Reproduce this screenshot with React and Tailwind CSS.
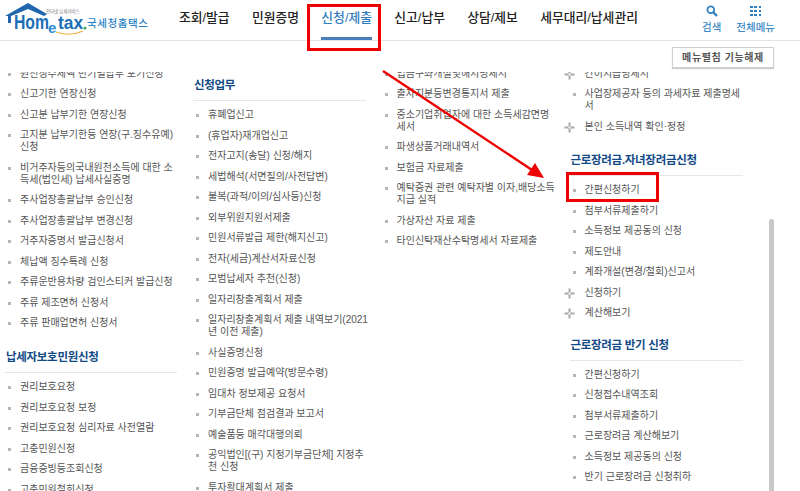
import React from "react";

const FONT = "font-['Liberation_Sans','Noto_Sans_CJK_KR',sans-serif]";

const navItems = ["조회/발급", "민원증명", "신청/제출", "신고/납부", "상담/제보", "세무대리/납세관리"];

const PlusIcon = () => (
  <svg width="11" height="11" viewBox="0 0 11 11" className="absolute left-[-6px] top-[1px]">
    <path d="M5.5 0.5v10M0.5 5.5h10" stroke="#a8a8a8" strokeWidth="2" />
    <path d="M5.5 4v3M4 5.5h3" stroke="#e4e4e4" strokeWidth="1" />
  </svg>
);

// one row of a menu list, the text wraps under itself
const Item = ({ children, plus }) => (
  <li className="relative pl-[15px] pb-[8.5px] leading-[12px] text-[10px] text-[#555] break-all">
    {plus ? <PlusIcon /> : <span className="absolute left-[3px] top-[5px] w-[3px] h-[3px] bg-[#b4b4b4]" />}
    {children}
  </li>
);

const Heading = ({ children, className = "" }) => (
  <h3 className={`${className} text-[11.5px] leading-[16px] font-bold text-[#124a86] pb-[7px] pl-px border-b border-[#e6e6e6] mb-[8px] tracking-[-0.3px]`}>
    {children}
  </h3>
);

const Logo = () => (
  <svg width="160" height="40" viewBox="0 0 160 40" className="shrink-0">
    <path d="M5 16 L28 3 L47 14 L44 16 L28 9 L11 16 L11 23 L8 23 L8 16 Z" fill="#1f66ac" />
    <text x="14" y="29" fontFamily="Liberation Sans" fontWeight="700" fontSize="21" textLength="35" lengthAdjust="spacingAndGlyphs" fill="#1a6fb5">Hom</text>
    <text x="48" y="33" fontFamily="Liberation Sans" fontWeight="700" fontSize="15" fill="#2f8fd0">e</text>
    <text x="58" y="29" fontFamily="Liberation Sans" fontWeight="700" fontSize="18" textLength="25" lengthAdjust="spacingAndGlyphs" fill="#1a6fb5">tax</text>
    <circle cx="85" cy="28" r="1.5" fill="#3aa655" />
    <path d="M56 32 Q70 37 83 31" fill="none" stroke="#f0b040" strokeWidth="1.2" />
    <text x="46" y="12.5" fontFamily="Noto Sans CJK KR" fontSize="4.4" fill="#777">인터넷 납세서비스</text>
    <text x="87" y="27" fontFamily="Noto Sans CJK KR" fontWeight="500" fontSize="10.5" textLength="61" fill="#2a83c4">국세청홈택스</text>
  </svg>
);

const App = () => {
  return (
    <div className={`${FONT} relative w-[800px] h-[491px] overflow-hidden bg-white flex flex-col`}>
      {/* header */}
      <header className="h-[41px] shrink-0 flex border-b border-[#e4e4e4]">
        <div className="w-[179px] shrink-0">
          <Logo />
        </div>
        <nav className="flex gap-[22.3px]">
          {navItems.map((n) => (
            <a
              key={n}
              className={`h-[40px] flex items-center pb-[2px] text-[12.8px] font-medium border-b-[3px] ${
                n === "신청/제출" ? "text-[#2f7dc0] border-[#4a7ebb]" : "text-[#222] border-transparent"
              }`}
            >
              {n}
            </a>
          ))}
        </nav>
        <div className="ml-auto pr-[25px] flex gap-[15px] text-[#3d8ac6] text-[10.5px] leading-[12px] font-medium">
          <div className="flex flex-col items-center pt-[5px] gap-[4px]">
            <svg width="12" height="12" viewBox="0 0 12 12">
              <circle cx="4.8" cy="4.8" r="3.4" fill="none" stroke="#2f7fc0" strokeWidth="1.8" />
              <path d="M7.4 7.4L11 11" stroke="#2f7fc0" strokeWidth="2.2" />
            </svg>
            <span>검색</span>
          </div>
          <div className="flex flex-col items-center pt-[5px] gap-[4px]">
            <div className="grid grid-cols-3 gap-[1.5px] w-[11px] h-[12px] content-center">
              {Array.from({ length: 9 }).map((_, i) => (
                <span key={i} className="w-[2.5px] h-[2.5px] bg-[#2f7fc0]" />
              ))}
            </div>
            <span>전체메뉴</span>
          </div>
        </div>
      </header>

      {/* toolbar */}
      <div className="h-[31px] shrink-0 flex justify-end items-start pt-[6px] pr-[26px]">
        <button className="w-[102px] h-[21px] border border-[#cfcfcf] bg-white shadow-[0_1px_1px_rgba(0,0,0,0.2)] text-[10px] font-bold text-[#555] tracking-[0.6px] whitespace-nowrap">
          메뉴펼침 기능해제
        </button>
      </div>

      {/* menu columns */}
      <div className="flex-1 min-h-0 overflow-hidden flex items-start pl-[5px]">
        <div className="w-[188px] shrink-0">
          <div className="w-[172px] mt-[-4.5px]">
            <ul>
              <Item>원천징수세액 반기별납부 포기신청</Item>
              <Item>신고기한 연장신청</Item>
              <Item>신고분 납부기한 연장신청</Item>
              <Item>고지분 납부기한등 연장(구.징수유예) 신청</Item>
              <Item>비거주자등의국내원천소득에 대한 소득세(법인세) 납세사실증명</Item>
              <Item>주사업장총괄납부 승인신청</Item>
              <Item>주사업장총괄납부 변경신청</Item>
              <Item>거주자증명서 발급신청서</Item>
              <Item>체납액 징수특례 신청</Item>
              <Item>주류운반용차량 검인스티커 발급신청</Item>
              <Item>주류 제조면허 신청서</Item>
              <Item>주류 판매업면허 신청서</Item>
            </ul>
            <Heading className="mt-[11.5px]">납세자보호민원신청</Heading>
            <ul>
              <Item>권리보호요청</Item>
              <Item>권리보호요청 보정</Item>
              <Item>권리보호요청 심리자료 사전열람</Item>
              <Item>고충민원신청</Item>
              <Item>금융증빙등조회신청</Item>
              <Item>고충민원철회신청</Item>
            </ul>
          </div>
        </div>

        <div className="w-[188.5px] shrink-0">
          <div className="w-[173px] pt-[5px]">
            <Heading>신청업무</Heading>
            <ul className="mr-[-6px]">
              <Item>휴폐업신고</Item>
              <Item>(휴업자)재개업신고</Item>
              <Item>전자고지(송달) 신청/해지</Item>
              <Item>세법해석(서면질의/사전답변)</Item>
              <Item>불복(과적/이의/심사등)신청</Item>
              <Item>외부위원지원서제출</Item>
              <Item>민원서류발급 제한(해지신고)</Item>
              <Item>전자(세금)계산서자료신청</Item>
              <Item>모범납세자 추천(신청)</Item>
              <Item>일자리창출계획서 제출</Item>
              <Item>일자리창출계획서 제출 내역보기(2021년 이전 제출)</Item>
              <Item>사실증명신청</Item>
              <Item>민원증명 발급예약(방문수령)</Item>
              <Item>임대차 정보제공 요청서</Item>
              <Item>기부금단체 점검결과 보고서</Item>
              <Item>예술품등 매각대행의뢰</Item>
              <Item>공익법인[(구) 지정기부금단체] 지정추<br />천 신청</Item>
              <Item>투자활대계획서 제출</Item>
            </ul>
          </div>
        </div>

        <div className="w-[188px] shrink-0">
          <div className="w-[176px] mt-[-4.5px]">
            <ul>
              <Item>입금구좌개설및해지명세서</Item>
              <Item>출자지분등변경통지서 제출</Item>
              <Item>중소기업취업자에 대한 소득세감면명<br />세서</Item>
              <Item>파생상품거래내역서</Item>
              <Item>보험금 자료제출</Item>
              <Item>예탁증권 관련 예탁자별 이자,배당소득 지급 실적</Item>
              <Item>가상자산 자료 제출</Item>
              <Item>타인신탁재산수탁명세서 자료제출</Item>
            </ul>
          </div>
        </div>

        <div className="w-[173px] shrink-0 mt-[-4.5px]">
          <ul>
            <Item plus>간이지급명세서</Item>
            <Item>사업장제공자 등의 과세자료 제출명세서</Item>
            <Item plus>본인 소득내역 확인·정정</Item>
          </ul>
          <Heading className="mt-[11px]">근로장려금.자녀장려금신청</Heading>
          <ul>
            <Item>간편신청하기</Item>
            <Item>첨부서류제출하기</Item>
            <Item>소득정보 제공동의 신청</Item>
            <Item>제도안내</Item>
            <Item>계좌개설(변경/철회)신고서</Item>
            <Item plus>신청하기</Item>
            <Item plus>계산해보기</Item>
          </ul>
          <Heading className="mt-[9px]">근로장려금 반기 신청</Heading>
          <ul>
            <Item>간편신청하기</Item>
            <Item>신청접수내역조회</Item>
            <Item>첨부서류제출하기</Item>
            <Item>근로장려금 계산해보기</Item>
            <Item>소득정보 제공동의 신청</Item>
            <Item>반기 근로장려금 신청취하</Item>
          </ul>
        </div>
      </div>

      {/* scrollbar thumb */}
      <div className="absolute left-[769px] top-[219px] bottom-0 w-[5px] rounded-t-[3px] bg-[#c8c8c8]" />

      {/* red annotations drawn over the screenshot */}
      <div className="absolute left-[307px] top-[4px] w-[74px] h-[47px] border-[3px] border-[#ee0000]" />
      <div className="absolute left-[566px] top-[172px] w-[93px] h-[30px] border-[3px] border-[#ee0000]" />
      <svg className="absolute left-0 top-0 pointer-events-none" width="800" height="491" viewBox="0 0 800 491">
        <path d="M383 71L532 170" stroke="#ee0000" strokeWidth="2.4" />
        <path d="M544 178L527 175L535 163Z" fill="#ee0000" />
      </svg>
    </div>
  );
};

export default App;
